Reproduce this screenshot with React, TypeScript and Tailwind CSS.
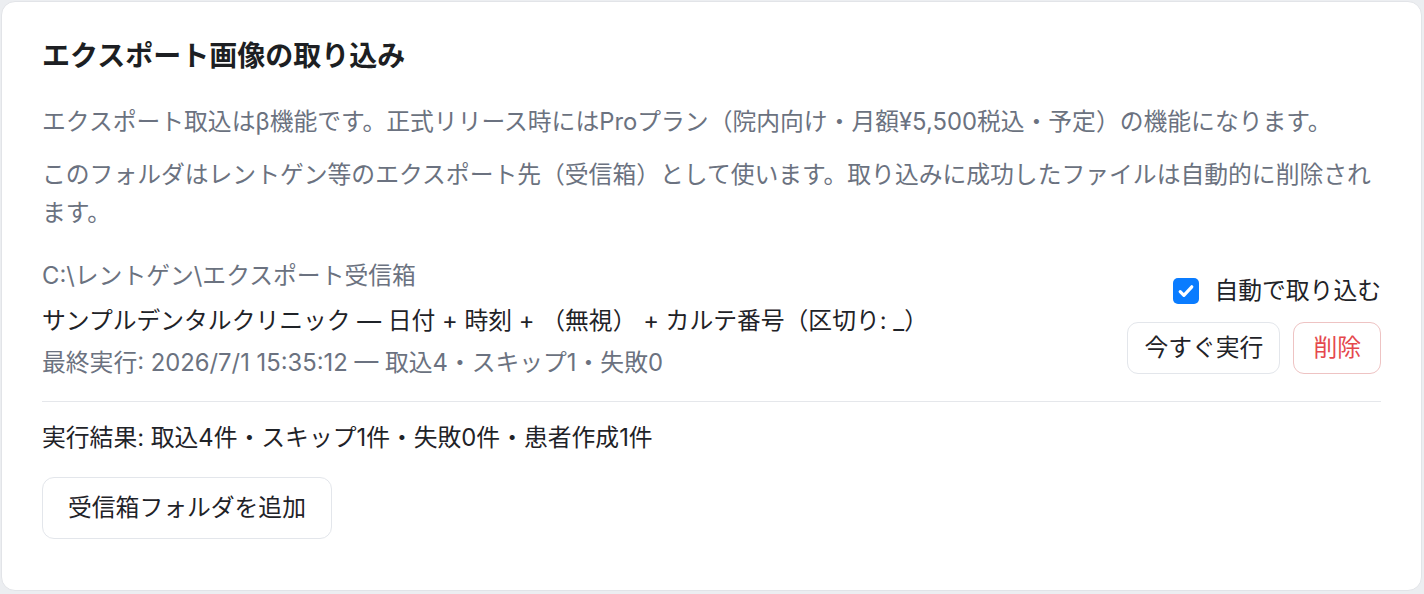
import React from "react";

const font = "font-['Inter','Noto_Sans_CJK_JP',sans-serif]";

function CheckBox() {
    return (
        <span className="flex h-[26px] w-[26px] items-center justify-center rounded-[5px] bg-[#0a7cff]">
            <svg viewBox="0 0 20 20" className="h-[20px] w-[20px]" fill="none">
                <path
                    d="M4.2 10.6l3.7 3.7L15.8 5.8"
                    stroke="white"
                    strokeWidth="3.2"
                    strokeLinecap="round"
                    strokeLinejoin="round"
                />
            </svg>
        </span>
    );
}

function InboxFolder() {
    return (
        <div className="mt-[26px] flex items-center justify-between border-b border-[#e5e7eb] pb-[20px]">
            <div className="flex flex-col">
                <div className="leading-[36px] text-[#6b7280]">C:\レントゲン\エクスポート受信箱</div>
                <div className="mt-[9px] leading-[36px] text-[#1f2328]">
                    サンプルデンタルクリニック — 日付 + 時刻 + （無視） + カルテ番号（区切り: _）
                </div>
                <div className="mt-[6px] leading-[36px] text-[#6b7280]">
                    最終実行: 2026/7/1 15:35:12 — 取込4・スキップ1・失敗0
                </div>
            </div>
            <div className="mt-[8px] flex flex-col items-end gap-[13px]">
                <label className="flex items-center gap-[15px] leading-[36px] text-[#1f2328]">
                    <CheckBox />
                    自動で取り込む
                </label>
                <div className="flex gap-[13px]">
                    <button className="h-[52px] rounded-[11px] border border-[#e3e6eb] bg-white px-4 text-[#1f2328]">
                        今すぐ実行
                    </button>
                    <button className="h-[52px] rounded-[11px] border border-[#eec3c3] bg-white px-[19px] text-[#e5484d]">
                        削除
                    </button>
                </div>
            </div>
        </div>
    );
}

export default function App() {
    return (
        <div className={`h-[594px] w-[1424px] bg-[#eceef1] pl-px pr-[2px] pt-px ${font}`}>
            <div className="h-[590px] rounded-[14px] border border-[#e2e4e8] bg-white px-[40px] pt-[36px] text-[23.8px]">
                <h3 className="text-[28px] font-bold leading-[36px] text-[#1d1f23]">エクスポート画像の取り込み</h3>
                <p className="mt-[29px] leading-[38px] text-[#6b7280]">
                    エクスポート取込はβ機能です。正式リリース時にはProプラン（院内向け・月額¥5,500税込・予定）の機能になります。
                </p>
                <p className="mt-[15px] leading-[38px] text-[#6b7280]">
                    このフォルダはレントゲン等のエクスポート先（受信箱）として使います。取り込みに成功したファイルは自動的に削除されます。
                </p>
                <InboxFolder />
                <div className="mt-[18px] leading-[36px] text-[#1f2328]">
                    実行結果: 取込4件・スキップ1件・失敗0件・患者作成1件
                </div>
                <button className="mt-[21px] h-[62px] rounded-[12px] border border-[#e3e6eb] bg-white px-[25px] text-[#1f2328]">
                    受信箱フォルダを追加
                </button>
            </div>
        </div>
    );
}
